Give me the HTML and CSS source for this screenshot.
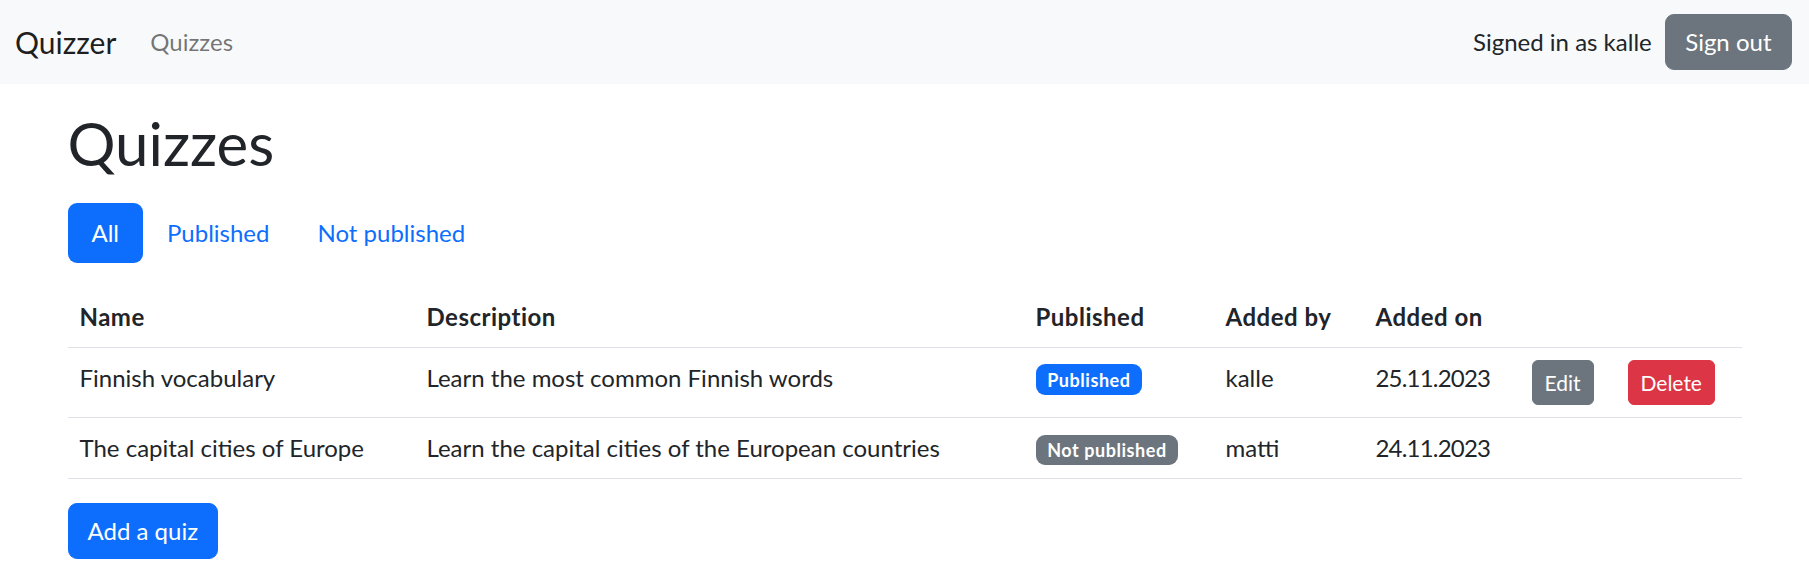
FILE: index.html
```html
<!DOCTYPE html>
<html lang="en">
<head>
<meta charset="utf-8">
<title>Quizzer</title>
<link rel="stylesheet" href="styles.css">
</head>
<body>
<nav class="navbar">
  <div class="navbar-inner">
    <div class="navbar-left">
      <a class="brand" href="#">Quizzer</a>
      <a class="nav-link" href="#">Quizzes</a>
    </div>
    <div class="navbar-right">
      <span class="signed-in">Signed in as kalle</span>
      <button class="btn btn-secondary btn-nav">Sign out</button>
    </div>
  </div>
</nav>
<main class="container">
  <h1 class="page-title">Quizzes</h1>
  <ul class="pills">
    <li><a class="pill active" href="#">All</a></li>
    <li><a class="pill" href="#">Published</a></li>
    <li><a class="pill" href="#">Not published</a></li>
  </ul>
  <table class="table">
    <colgroup>
      <col class="col-name">
      <col class="col-desc">
      <col class="col-pub">
      <col class="col-by">
      <col class="col-on">
      <col class="col-edit">
      <col class="col-del">
    </colgroup>
    <thead>
      <tr>
        <th>Name</th>
        <th>Description</th>
        <th>Published</th>
        <th>Added by</th>
        <th>Added on</th>
        <th></th>
        <th></th>
      </tr>
    </thead>
    <tbody>
      <tr>
        <td>Finnish vocabulary</td>
        <td>Learn the most common Finnish words</td>
        <td><span class="badge badge-primary">Published</span></td>
        <td>kalle</td>
        <td class="date">25.11.2023</td>
        <td><button class="btn btn-sm btn-secondary">Edit</button></td>
        <td><button class="btn btn-sm btn-danger">Delete</button></td>
      </tr>
      <tr>
        <td>The capital cities of Europe</td>
        <td>Learn the capital cities of the European countries</td>
        <td><span class="badge badge-secondary">Not published</span></td>
        <td>matti</td>
        <td class="date">24.11.2023</td>
        <td></td>
        <td></td>
      </tr>
    </tbody>
  </table>
  <button class="btn btn-primary btn-add">Add a quiz</button>
</main>
</body>
</html>
```
FILE: styles.css
```css
* { box-sizing: border-box; }

body {
  margin: 0;
  font-family: "Lato", "Liberation Sans", sans-serif;
  font-size: 24px;
  line-height: 1.5;
  color: #212529;
  background: #fff;
}

a { text-decoration: none; }

/* Navbar */
.navbar {
  background: #f8f9fa;
  padding: 12px 0;
}
.navbar-inner {
  display: flex;
  align-items: center;
  justify-content: space-between;
  padding: 0 17px 0 15px;
}
.navbar-left {
  display: flex;
  align-items: center;
}
.brand {
  font-size: 30px;
  line-height: 45px;
  padding: 7.5px 0;
  margin-right: 22px;
  color: rgba(0, 0, 0, 0.9);
}
.nav-link {
  padding: 12px 12px;
  color: rgba(0, 0, 0, 0.55);
}
.navbar-right {
  display: flex;
  align-items: center;
}
.signed-in {
  margin-right: 13px;
}

/* Buttons */
.btn {
  font-family: inherit;
  font-size: 24px;
  line-height: 36px;
  padding: 9px 18px;
  border: 1px solid transparent;
  border-radius: 9px;
  color: #fff;
  cursor: pointer;
  display: inline-block;
}
.btn-nav { padding: 9px 19.5px; }
.btn-add { padding: 9px 19px; }
.btn-sm {
  font-size: 21px;
  line-height: 31.5px;
  padding: 6px 12px;
  border-radius: 6px;
}
.btn-secondary { background: #6c757d; border-color: #6c757d; }
.btn-danger { background: #dc3545; border-color: #dc3545; }
.btn-primary { background: #0d6efd; border-color: #0d6efd; }

/* Main */
.container {
  max-width: 1710px;
  margin: 0 auto;
  padding: 0 18px;
}
.page-title {
  font-size: 60px;
  font-weight: 400;
  line-height: 72px;
  margin: 22.5px 0 24px;
}

.pills {
  display: flex;
  list-style: none;
  margin: 0 0 24px;
  padding: 0;
}
.pill {
  display: block;
  padding: 12px 24px;
  color: #0d6efd;
  border-radius: 9px;
}
.pill.active {
  background: #0d6efd;
  color: #fff;
}

/* Table */
.table {
  width: 100%;
  border-collapse: collapse;
  table-layout: fixed;
  margin-bottom: 24px;
}
.col-name { width: 347px; }
.col-desc { width: 609px; }
.col-pub { width: 190px; }
.col-by { width: 150px; }
.col-on { width: 156px; }
.col-edit { width: 96px; }
.col-del { width: 126px; }

.table th,
.table td {
  padding: 12px;
  text-align: left;
  vertical-align: top;
  border-bottom: 1px solid #dee2e6;
  white-space: nowrap;
}
.table th {
  font-weight: 700;
  letter-spacing: 0.5px;
}
.table .date { letter-spacing: -0.8px; }

.badge {
  display: inline-block;
  font-size: 18px;
  font-weight: 700;
  line-height: 1;
  letter-spacing: 0.55px;
  padding: 6.3px 11.7px;
  border-radius: 9px;
  color: #fff;
  vertical-align: baseline;
}
.badge-primary { background: #0d6efd; }
.badge-secondary { background: #6c757d; }
```
